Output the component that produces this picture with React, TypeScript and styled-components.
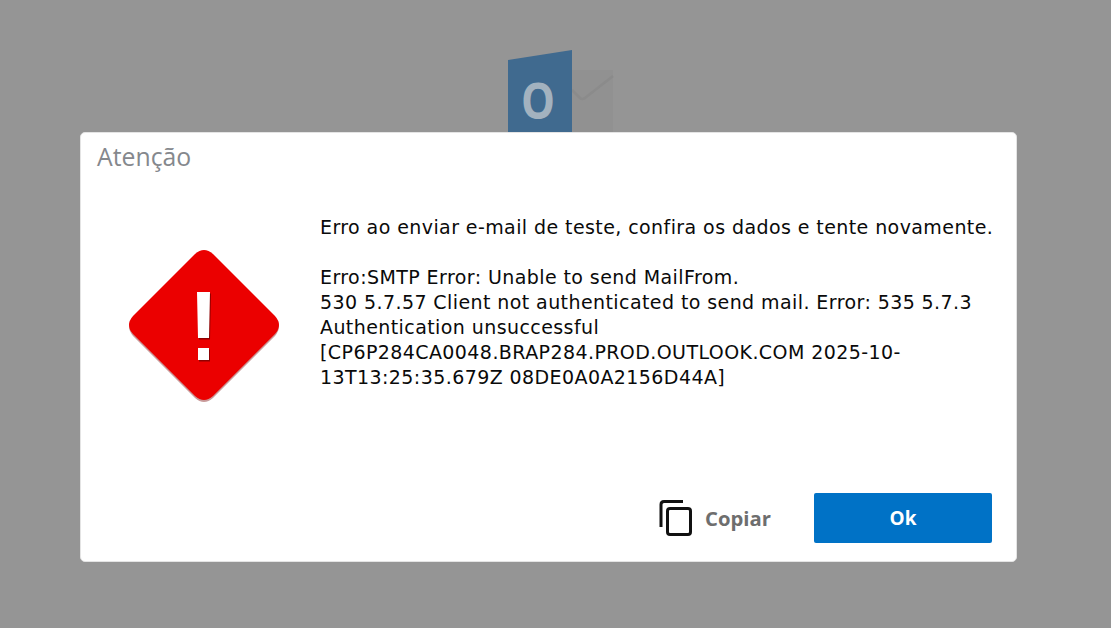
import * as React from 'react';
import styled, { createGlobalStyle } from 'styled-components';

const GlobalStyle = createGlobalStyle`
  html, body {
    margin: 0;
    padding: 0;
    height: 100%;
    background: #959595;
    overflow: hidden;
  }
`;

const Page = styled.div`
  width: 1111px;
  height: 628px;
  display: flex;
  justify-content: center;
  background: #959595;
`;

const LogoBox = styled.div`
  width: 120px;
  height: 100px;
  margin-top: 45px;
  margin-left: 25px;
`;

const Overlay = styled.div`
  position: absolute;
  top: 132px;
  left: 80px;
`;

const Dialog = styled.div`
  width: 937px;
  height: 430px;
  box-sizing: border-box;
  background: #fff;
  border: 1px solid #e4e4e4;
  border-radius: 5px;
  display: flex;
  flex-direction: column;
  padding: 7px 24px 18px 16px;
`;

const Title = styled.h2`
  margin: 0;
  font-family: 'Open Sans', 'Noto Sans', sans-serif;
  font-weight: 400;
  font-size: 24.8px;
  line-height: 32px;
  color: #85888d;
`;

const Body = styled.div`
  flex: 1;
  display: flex;
  padding-top: 43px;
`;

const IconColumn = styled.div`
  width: 223px;
  flex-shrink: 0;
  padding: 35px 0 0 32px;
  box-sizing: border-box;
`;

const Message = styled.div`
  font-family: 'DejaVu Sans', sans-serif;
  font-size: 19px;
  letter-spacing: 0.415px;
  line-height: 25px;
  color: #0a0a0a;
  width: 680px;
  white-space: nowrap;
`;

const Spacer = styled.div`
  height: 25px;
`;

const Footer = styled.div`
  display: flex;
  justify-content: flex-end;
  align-items: center;
`;

const CopyButton = styled.button`
  display: flex;
  align-items: center;
  gap: 11px;
  border: 0;
  background: none;
  padding: 0;
  margin-right: 43px;
  font-family: 'Open Sans', 'Noto Sans', sans-serif;
  font-weight: 700;
  font-size: 20.3px;
  color: #6e6e6e;
`;

const OkButton = styled.button`
  width: 178px;
  height: 50px;
  border: 0;
  border-radius: 2px;
  background: #0072c6;
  color: #fff;
  font-family: 'Open Sans', 'Noto Sans', sans-serif;
  font-weight: 700;
  font-size: 19px;
`;

const OutlookLogo = () => (
  <svg width="120" height="100" viewBox="0 0 120 100">
    <path d="M64 25h41v75H64z" fill="#919191" />
    <path d="M64 45l8 8q2 2 5 0l28-22" fill="none" stroke="#8b8b8b" strokeWidth="2.500" />
    <path d="M0 15 64 5v95H0z" fill="#406a8f" />
    <text
      x="30"
      y="74"
      textAnchor="middle"
      fontFamily="'Open Sans', sans-serif"
      fontWeight="700"
      fontSize="50"
      textLength="34"
      lengthAdjust="spacingAndGlyphs"
      fill="#a3b2bf"
    >
      O
    </text>
  </svg>
);

const AlertIcon = () => (
  <svg width="152" height="154" viewBox="0 0 152 154">
    <path d="M66 5Q75 -3 84 5L146 67Q154 75 146 85L84 147Q75 155 66 147L4 85Q-4 75 4 67Z" fill="#c99a9a" transform="translate(0 1)" />
    <path d="M66 4Q75 -4 84 4L146 66Q154 75 146 84L84 146Q75 154 66 146L4 84Q-4 75 4 66Z" fill="#eb0000" />
    <path d="M68 42h13l-1 46H69zM69 98h11v12H69z" fill="#8f0000" transform="translate(1 1.500)" />
    <path d="M68 42h13l-1 46H69zM69 98h11v12H69z" fill="#fff" />
  </svg>
);

const CopyIcon = () => (
  <svg width="36" height="38" viewBox="0 0 36 38" fill="none" stroke="#111" strokeWidth="3">
    <path d="M25 2.500H6Q3 2.500 3 5.500V28" />
    <rect x="9.500" y="9.500" width="23" height="26" rx="2.500" />
  </svg>
);

const App = () => (
  <Page>
    <GlobalStyle />
    <LogoBox>
      <OutlookLogo />
    </LogoBox>
    <Overlay>
      <Dialog>
        <Title>Atenção</Title>
        <Body>
          <IconColumn>
            <AlertIcon />
          </IconColumn>
          <Message>
            Erro ao enviar e-mail de teste, confira os dados e tente novamente.
            <Spacer />
            Erro:SMTP Error: Unable to send MailFrom.
            <br />
            530 5.7.57 Client not authenticated to send mail. Error: 535 5.7.3
            <br />
            Authentication unsuccessful
            <br />
            [CP6P284CA0048.BRAP284.PROD.OUTLOOK.COM 2025-10-
            <br />
            13T13:25:35.679Z 08DE0A0A2156D44A]
          </Message>
        </Body>
        <Footer>
          <CopyButton>
            <CopyIcon />
            Copiar
          </CopyButton>
          <OkButton>Ok</OkButton>
        </Footer>
      </Dialog>
    </Overlay>
  </Page>
);

export default App;
